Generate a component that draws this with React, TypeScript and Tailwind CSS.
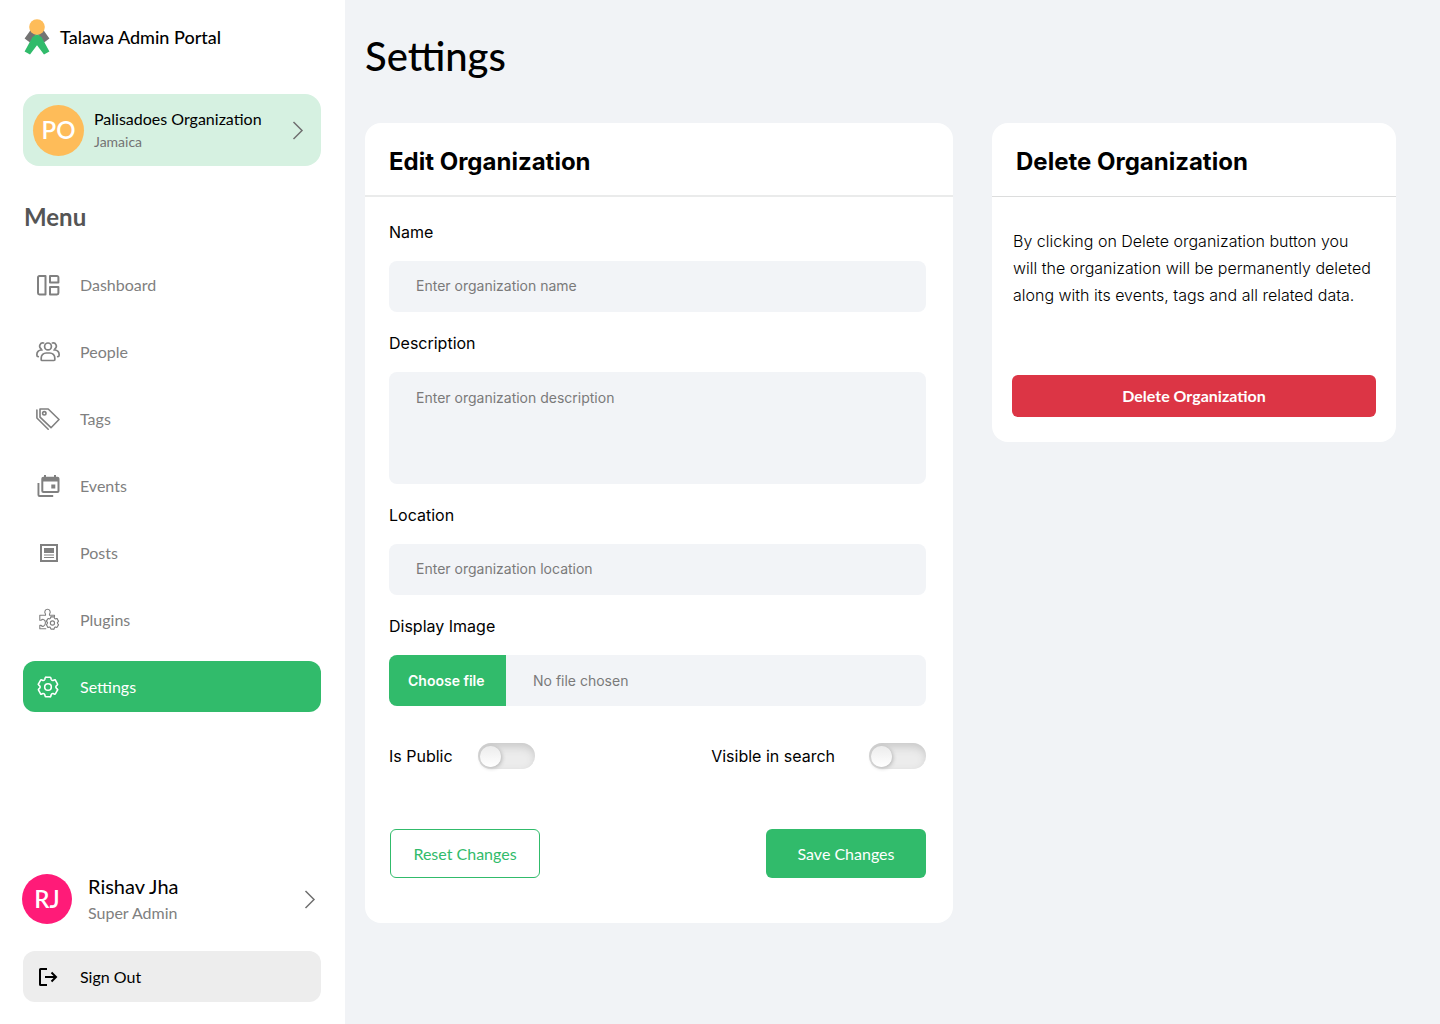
import React, { useState } from 'react';

interface IconProps {
  className?: string;
}

interface NavItem {
  label: string;
  icon: React.FC<IconProps>;
}

const TalawaLogo = () => (
  <svg width="26" height="36" viewBox="0 0 26 36" aria-hidden="true">
    <path d="M7 10.5 0.6 19.5 6 23.5 13 14l7 9.5 5.4-4L19 10.5Z" fill="#737373" />
    <path d="M13 15 17.5 18 25.4 32.6 20 35.6 13 26.2 6 35.6 0.6 32.6 8.5 18Z" fill="#31bb6b" />
    <circle cx="13" cy="8" r="7.8" fill="#febc59" />
  </svg>
);

const DashboardIcon: React.FC<IconProps> = ({ className }) => (
  <svg className={className} viewBox="0 0 24 24" fill="none" stroke="currentColor" strokeWidth="2" strokeLinejoin="round">
    <path d="M3.4 3H9.5V21.5H3.4A1.4 1.4 0 0 1 2 20.1V4.4A1.4 1.4 0 0 1 3.4 3ZM14 3h7a1.4 1.4 0 0 1 1.4 1.4V9.5H14ZM14 14h8.4v6.1A1.4 1.4 0 0 1 21 21.5h-7Z" />
  </svg>
);

const PeopleIcon: React.FC<IconProps> = ({ className }) => (
  <svg className={className} viewBox="0 0 24 24" fill="none" stroke="currentColor" strokeWidth="1.7" strokeLinecap="round">
    <circle cx="12" cy="6.4" r="3.4" />
    <path d="M6 20.5h12a.8.8 0 0 0 .8-.8V18a5 5 0 0 0-5-5h-3.6a5 5 0 0 0-5 5v1.7a.8.8 0 0 0 .8.8Z" />
    <path d="M7.6 3A3.2 3.2 0 0 0 5 8.7M16.4 3A3.2 3.2 0 0 1 19 8.7M6 10H5a4.2 4.2 0 0 0-4.1 4.3v.9a1.4 1.4 0 0 0 1.4 1.4M18 10h1a4.2 4.2 0 0 1 4.1 4.3v.9a1.4 1.4 0 0 1-1.4 1.4" />
  </svg>
);

const TagsIcon: React.FC<IconProps> = ({ className }) => (
  <svg className={className} viewBox="0 0 24 24" fill="none" stroke="currentColor" strokeWidth="1.6" strokeLinejoin="round" strokeLinecap="round">
    <path d="M4 2h8.2L23 12.5l-8 8.2L4 10.2Z" />
    <path d="M.9 3v8L12.2 22.2" />
    <circle cx="8.3" cy="6.3" r="1.7" />
  </svg>
);

const EventsIcon: React.FC<IconProps> = ({ className }) => (
  <svg className={className} viewBox="-1 0 24 24" fill="currentColor">
    <path fillRule="evenodd" d="M7 1h2v1.7h8V1h2v1.7h1.5a2 2 0 0 1 2 2V17a2 2 0 0 1-2 2H6.3a2 2 0 0 1-2-2V4.700a2 2 0 0 1 2-2H7ZM6.300 7.500V17h14.200V7.500Z" />
    <path d="M14.300 10.500h4v4h-4ZM.5 9h1.900v12h13.800v2H2.500a2 2 0 0 1-2-2Z" />
  </svg>
);

const PostsIcon: React.FC<IconProps> = ({ className }) => (
  <svg className={className} viewBox="-1 0 24 24" fill="currentColor">
    <path fillRule="evenodd" d="M3 3h18v18H3ZM5 5v14h14V5Z" />
    <path d="M7 7h10v5H7ZM7 13.500h10v1H7ZM7 16h10v1H7Z" />
  </svg>
);

// One tooth of the gear, repeated every 60 degrees
const TOOTH = 'M9.6 1.4h4.8c.6 0 .7.6.8 1.1L15.4 3.6Q15.95 5.16 17.58 4.86L18.63 4.48C19.11 4.32 19.68 4.1 19.98 4.62';

const Gear = () => (
  <>
    {[0, 60, 120, 180, 240, 300].map((angle) => (
      <path key={angle} d={TOOTH} transform={`rotate(${angle} 12 12)`} />
    ))}
    <circle cx="12" cy="12" r="3.6" />
  </>
);

const PluginsIcon: React.FC<IconProps> = ({ className }) => (
  <svg className={className} viewBox="-1 0 24 24" fill="none" stroke="currentColor" strokeWidth="1.1" strokeLinejoin="round" strokeLinecap="round">
    <path d="M8.8 20.800H2.800v-3.400h1.400c.6 1 1.500 1.100 2.300.8 2.600-.9 2.600-5.800 0-6.700-.8-.3-1.700-.1-2.300.8H2.800V7.200h5.700V6C7 4.300 8 1.300 10.500 1.300S14 4.300 12.500 6v1.200h5v1.200" />
    <g transform="translate(8.500 8) scale(.58)" strokeWidth="2">
      <Gear />
    </g>
  </svg>
);

const SettingsIcon: React.FC<IconProps> = ({ className }) => (
  <svg className={className} viewBox="-1 -1 26 26" fill="none" stroke="currentColor" strokeWidth="1.7" strokeLinejoin="round" strokeLinecap="round">
    <Gear />
  </svg>
);

const SignOutIcon: React.FC<IconProps> = ({ className }) => (
  <svg className={className} viewBox="0 0 24 24" fill="none" stroke="currentColor" strokeWidth="2">
    <path d="M11 4H4.600A.6.6 0 0 0 4 4.600v14.800a.6.6 0 0 0 .6.6H11M9 12h11M15.500 7.500 20 12l-4.500 4.500" />
  </svg>
);

const Chevron = () => (
  <svg width="12" height="20" viewBox="0 0 12 20" fill="none" stroke="#707070" strokeWidth="1.5" aria-hidden="true">
    <path d="m1.500 2 8.500 8.500L1.500 19" />
  </svg>
);

const navItems: NavItem[] = [
  { label: 'Dashboard', icon: DashboardIcon },
  { label: 'People', icon: PeopleIcon },
  { label: 'Tags', icon: TagsIcon },
  { label: 'Events', icon: EventsIcon },
  { label: 'Posts', icon: PostsIcon },
  { label: 'Plugins', icon: PluginsIcon },
  { label: 'Settings', icon: SettingsIcon },
];

const fieldClass =
  'block w-full rounded-lg bg-[#f2f4f7] px-[27px] text-sm text-gray-800 outline-none placeholder:text-[#7a7a7a] focus:ring-2 focus:ring-[#31bb6b]';
const labelClass = 'mb-[17px] block text-base leading-6';

const Sidebar = () => {
  const [active, setActive] = useState('Settings');

  return (
    <aside className="flex w-[345px] shrink-0 flex-col bg-white pt-[19px] pr-6 pb-[22px] pl-[23px] font-[Lato,sans-serif]">
      <div className="flex items-center gap-[10px] pl-px">
        <TalawaLogo />
        <span className="text-lg font-medium">Talawa Admin Portal</span>
      </div>

      <button className="mt-[39px] flex h-[72px] items-center gap-[10px] rounded-2xl bg-[#d6f1e1] pr-[17px] pl-[10px] text-left">
        <span className="flex size-[51px] items-center justify-center rounded-full bg-[#febc59] text-2xl font-semibold text-white">PO</span>
        <span className="grow">
          <span className="block text-base leading-6">Palisadoes Organization</span>
          <span className="block text-sm leading-[22px] text-[#737373]">Jamaica</span>
        </span>
        <Chevron />
      </button>

      <h2 className="mt-[35px] pl-px text-2xl font-bold text-[#555]">Menu</h2>

      <nav className="mt-[26px] flex flex-col gap-4">
        {navItems.map(({ label, icon: Icon }) => (
          <a
            key={label}
            href={`#${label.toLowerCase()}`}
            onClick={() => setActive(label)}
            className={`flex h-[51px] items-center gap-5 rounded-xl px-[13px] text-base ${
              active === label ? 'bg-[#31bb6b] text-white' : 'text-[#808080] hover:bg-gray-100'
            }`}
          >
            <Icon className="size-6" />
            {label}
          </a>
        ))}
      </nav>

      <div className="mt-auto -ml-px flex items-center gap-4 pt-8 pr-[5px]">
        <span className="flex size-[50px] items-center justify-center rounded-full bg-[#ff1b78] text-2xl font-semibold text-white">RJ</span>
        <div className="grow">
          <p className="text-xl leading-7">Rishav Jha</p>
          <p className="text-base leading-[26px] text-[#808080]">Super Admin</p>
        </div>
        <button aria-label="Open profile">
          <Chevron />
        </button>
      </div>

      <button className="mt-[25px] flex h-[51px] items-center gap-5 rounded-xl bg-[#ededed] px-[13px] text-base">
        <SignOutIcon className="size-6" />
        Sign Out
      </button>
    </aside>
  );
};

const Toggle: React.FC<{ id: string; label: string; gap: string }> = ({ id, label, gap }) => (
  <div className={`flex items-center ${gap}`}>
    <label htmlFor={id} className="text-base">{label}</label>
    <input
      id={id}
      type="checkbox"
      role="switch"
      className="flex h-[26px] w-[57px] cursor-pointer appearance-none items-center rounded-full bg-[#ececec] px-[2px] shadow-[inset_1px_4px_8px_#c8c8c8] before:size-[21px] before:rounded-full before:bg-linear-to-b before:from-[#ececec] before:to-white before:shadow-[1px_1px_4px_#b0b0b0] before:transition-transform checked:bg-[#31bb6b] checked:before:translate-x-8"
    />
  </div>
);

const EditOrganization = () => {
  const [fileName, setFileName] = useState('');

  return (
    <section className="rounded-2xl bg-white">
      <h2 className="border-b-2 border-[#eaebeb] px-6 pt-[23px] pb-[17px] text-2xl font-bold">Edit Organization</h2>
      <form
        className="flex flex-col gap-[19px] pt-[23px] pr-[27px] pb-[45px] pl-6"
        onSubmit={(e) => e.preventDefault()}
        onReset={() => setFileName('')}
      >
        <div>
          <label htmlFor="name" className={labelClass}>Name</label>
          <input id="name" type="text" placeholder="Enter organization name" className={`${fieldClass} h-[51px] pb-0.5`} />
        </div>
        <div>
          <label htmlFor="description" className={labelClass}>Description</label>
          <textarea id="description" placeholder="Enter organization description" className={`${fieldClass} h-28 resize-none py-4`} />
        </div>
        <div>
          <label htmlFor="location" className={labelClass}>Location</label>
          <input id="location" type="text" placeholder="Enter organization location" className={`${fieldClass} h-[51px] pb-0.5`} />
        </div>
        <div>
          <label htmlFor="image" className={labelClass}>Display Image</label>
          <label htmlFor="image" className="flex h-[51px] cursor-pointer items-center overflow-hidden rounded-lg bg-[#f2f4f7] text-sm">
            <span className="flex h-full w-[117px] items-center bg-[#31bb6b] pl-[19px] font-semibold text-white">Choose file</span>
            <span className="pl-[27px] text-[#7a7a7a]">{fileName || 'No file chosen'}</span>
          </label>
          <input id="image" type="file" className="sr-only" onChange={(e) => setFileName(e.target.files?.[0]?.name ?? '')} />
        </div>

        <div className="mt-[18px] flex items-center justify-between">
          <Toggle id="public" label="Is Public" gap="gap-[25px]" />
          <Toggle id="visible" label="Visible in search" gap="gap-[34px]" />
        </div>

        <div className="mt-[41px] flex justify-between pl-px font-[Lato,sans-serif] text-base">
          <button type="reset" className="h-[49px] w-[150px] rounded-md border border-[#31bb6b] text-[#31bb6b]">
            Reset Changes
          </button>
          <button type="submit" className="h-[49px] w-40 rounded-md bg-[#31bb6b] text-white">
            Save Changes
          </button>
        </div>
      </form>
    </section>
  );
};

const DeleteOrganization = () => (
  <section className="rounded-2xl bg-white">
    <h2 className="border-b border-[#dcdddd] px-6 pt-[23px] pb-[18px] text-2xl font-bold">Delete Organization</h2>
    <div className="px-5 pt-[31px] pb-[25px]">
      <p className="pl-px text-base leading-[27px] font-light">
        By clicking on Delete organization button you will the organization will be permanently deleted along with its
        events, tags and all related data.
      </p>
      <button className="mt-[66px] h-[42px] w-full rounded-md bg-[#dc3545] font-[Lato,sans-serif] text-base font-bold text-white">
        Delete Organization
      </button>
    </div>
  </section>
);

export default function App() {
  return (
    <div className="flex min-h-screen bg-[#f1f3f6] font-[Inter,sans-serif] text-black">
      <Sidebar />
      <main className="grow pt-[31px] pr-11 pb-8 pl-5">
        <h1 className="font-[Lato,sans-serif] text-[40px] leading-[50px] font-medium">Settings</h1>
        <div className="mt-[42px] grid grid-cols-[588fr_404fr] items-start gap-[39px]">
          <EditOrganization />
          <DeleteOrganization />
        </div>
      </main>
    </div>
  );
}
